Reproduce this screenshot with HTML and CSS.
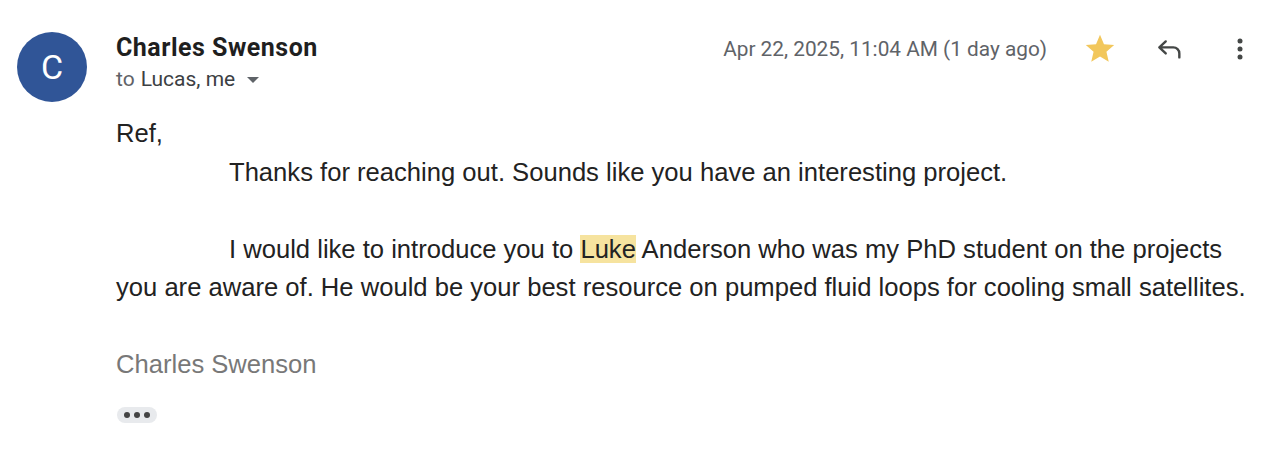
FILE: index.html
```html
<!DOCTYPE html>
<html>
<head>
<meta charset="utf-8">
<link rel="stylesheet" href="styles.css">
</head>
<body>
<div class="message">
  <div class="avatar">C</div>
  <div class="content">
    <div class="header">
      <div class="sender">
        <div class="name">Charles Swenson</div>
        <div class="recips"><span class="to">to</span> Lucas, me <span class="caret"></span></div>
      </div>
      <div class="meta">
        <span class="date">Apr 22, 2025, 11:04 AM (1 day ago)</span>
        <span class="icon-btn">
          <svg width="34" height="34" viewBox="0 0 24 24"><path fill="#f2c75c" d="M12 17.27L18.18 21l-1.64-7.03L22 9.24l-7.19-.61L12 2 9.19 8.63 2 9.24l5.46 4.73L5.82 21z"/></svg>
        </span>
        <span class="icon-btn">
          <svg width="32" height="32" viewBox="0 0 24 24"><path fill="none" stroke="#444746" stroke-width="1.8" stroke-linecap="round" stroke-linejoin="round" d="M8.8 6.3L4 10.8l4.8 4.5M4.3 10.8H14.5a4.5 4.5 0 0 1 4.5 4.5v3"/></svg>
        </span>
        <span class="icon-btn">
          <svg width="8" height="24" viewBox="0 0 8 24"><circle cx="4" cy="4" r="2.5" fill="#444746"/><circle cx="4" cy="12" r="2.5" fill="#444746"/><circle cx="4" cy="20" r="2.5" fill="#444746"/></svg>
        </span>
      </div>
    </div>
    <div class="body">
      <div>Ref,</div>
      <div class="indent">Thanks for reaching out. Sounds like you have an interesting project.</div>
      <div class="blank">&nbsp;</div>
      <div class="indent">I would like to introduce you to <span class="hl">Luke</span> Anderson who was my PhD student on the projects you are aware of. He would be your best resource on pumped fluid loops for cooling small satellites.</div>
      <div class="blank">&nbsp;</div>
      <div class="signature">Charles Swenson</div>
    </div>
    <div class="more"><span></span><span></span><span></span></div>
  </div>
</div>
</body>
</html>
```

FILE: styles.css
```css
html, body {
  margin: 0;
  padding: 0;
  background: #ffffff;
}

.message {
  display: flex;
  padding: 32px 10px 0 17px;
  gap: 29px;
}

.avatar {
  flex: none;
  width: 70px;
  height: 70px;
  border-radius: 50%;
  background: #305597;
  color: #ffffff;
  font-family: Roboto, "Liberation Sans", sans-serif;
  font-size: 34px;
  display: flex;
  align-items: center;
  justify-content: center;
}

.content {
  flex: 1;
  min-width: 0;
}

.header {
  display: flex;
  justify-content: space-between;
  align-items: flex-start;
}

.name {
  font-family: Roboto, "Liberation Sans", sans-serif;
  font-weight: 700;
  font-size: 25px;
  letter-spacing: 0.5px;
  line-height: 32px;
  color: #1f1f1f;
  margin-top: 0;
}

.recips {
  font-family: Roboto, "Liberation Sans", sans-serif;
  font-size: 21px;
  line-height: 28px;
  color: #3c4043;
  margin-top: 1px;
  display: flex;
  align-items: center;
  gap: 6px;
}

.to {
  color: #5f6368;
}

.caret {
  display: inline-block;
  width: 0;
  height: 0;
  border-left: 6px solid transparent;
  border-right: 6px solid transparent;
  border-top: 6px solid #5f6368;
  margin-left: 6px;
  margin-top: 2px;
}

.meta {
  display: flex;
  align-items: center;
  height: 34px;
  margin-top: 0;
}

.date {
  font-family: Roboto, "Liberation Sans", sans-serif;
  font-size: 20.8px;
  color: #5f6368;
  margin-right: 18px;
}

.icon-btn {
  width: 70px;
  height: 34px;
  display: flex;
  align-items: center;
  justify-content: center;
}

.body {
  font-family: "Liberation Sans", Arial, sans-serif;
  font-size: 25.6px;
  line-height: 38.5px;
  color: #222222;
  margin-top: 21px;
  padding-right: 17px;
}

.indent {
  text-indent: 113px;
}

.hl {
  background: #f6e39f;
}

.signature {
  color: #787878;
}

.more {
  display: flex;
  align-items: center;
  justify-content: center;
  gap: 4px;
  width: 40px;
  height: 16px;
  border-radius: 8px;
  background: #e8eaed;
  margin-top: 23px;
  margin-left: 1px;
}

.more span {
  width: 6px;
  height: 6px;
  border-radius: 50%;
  background: #444444;
}
```
